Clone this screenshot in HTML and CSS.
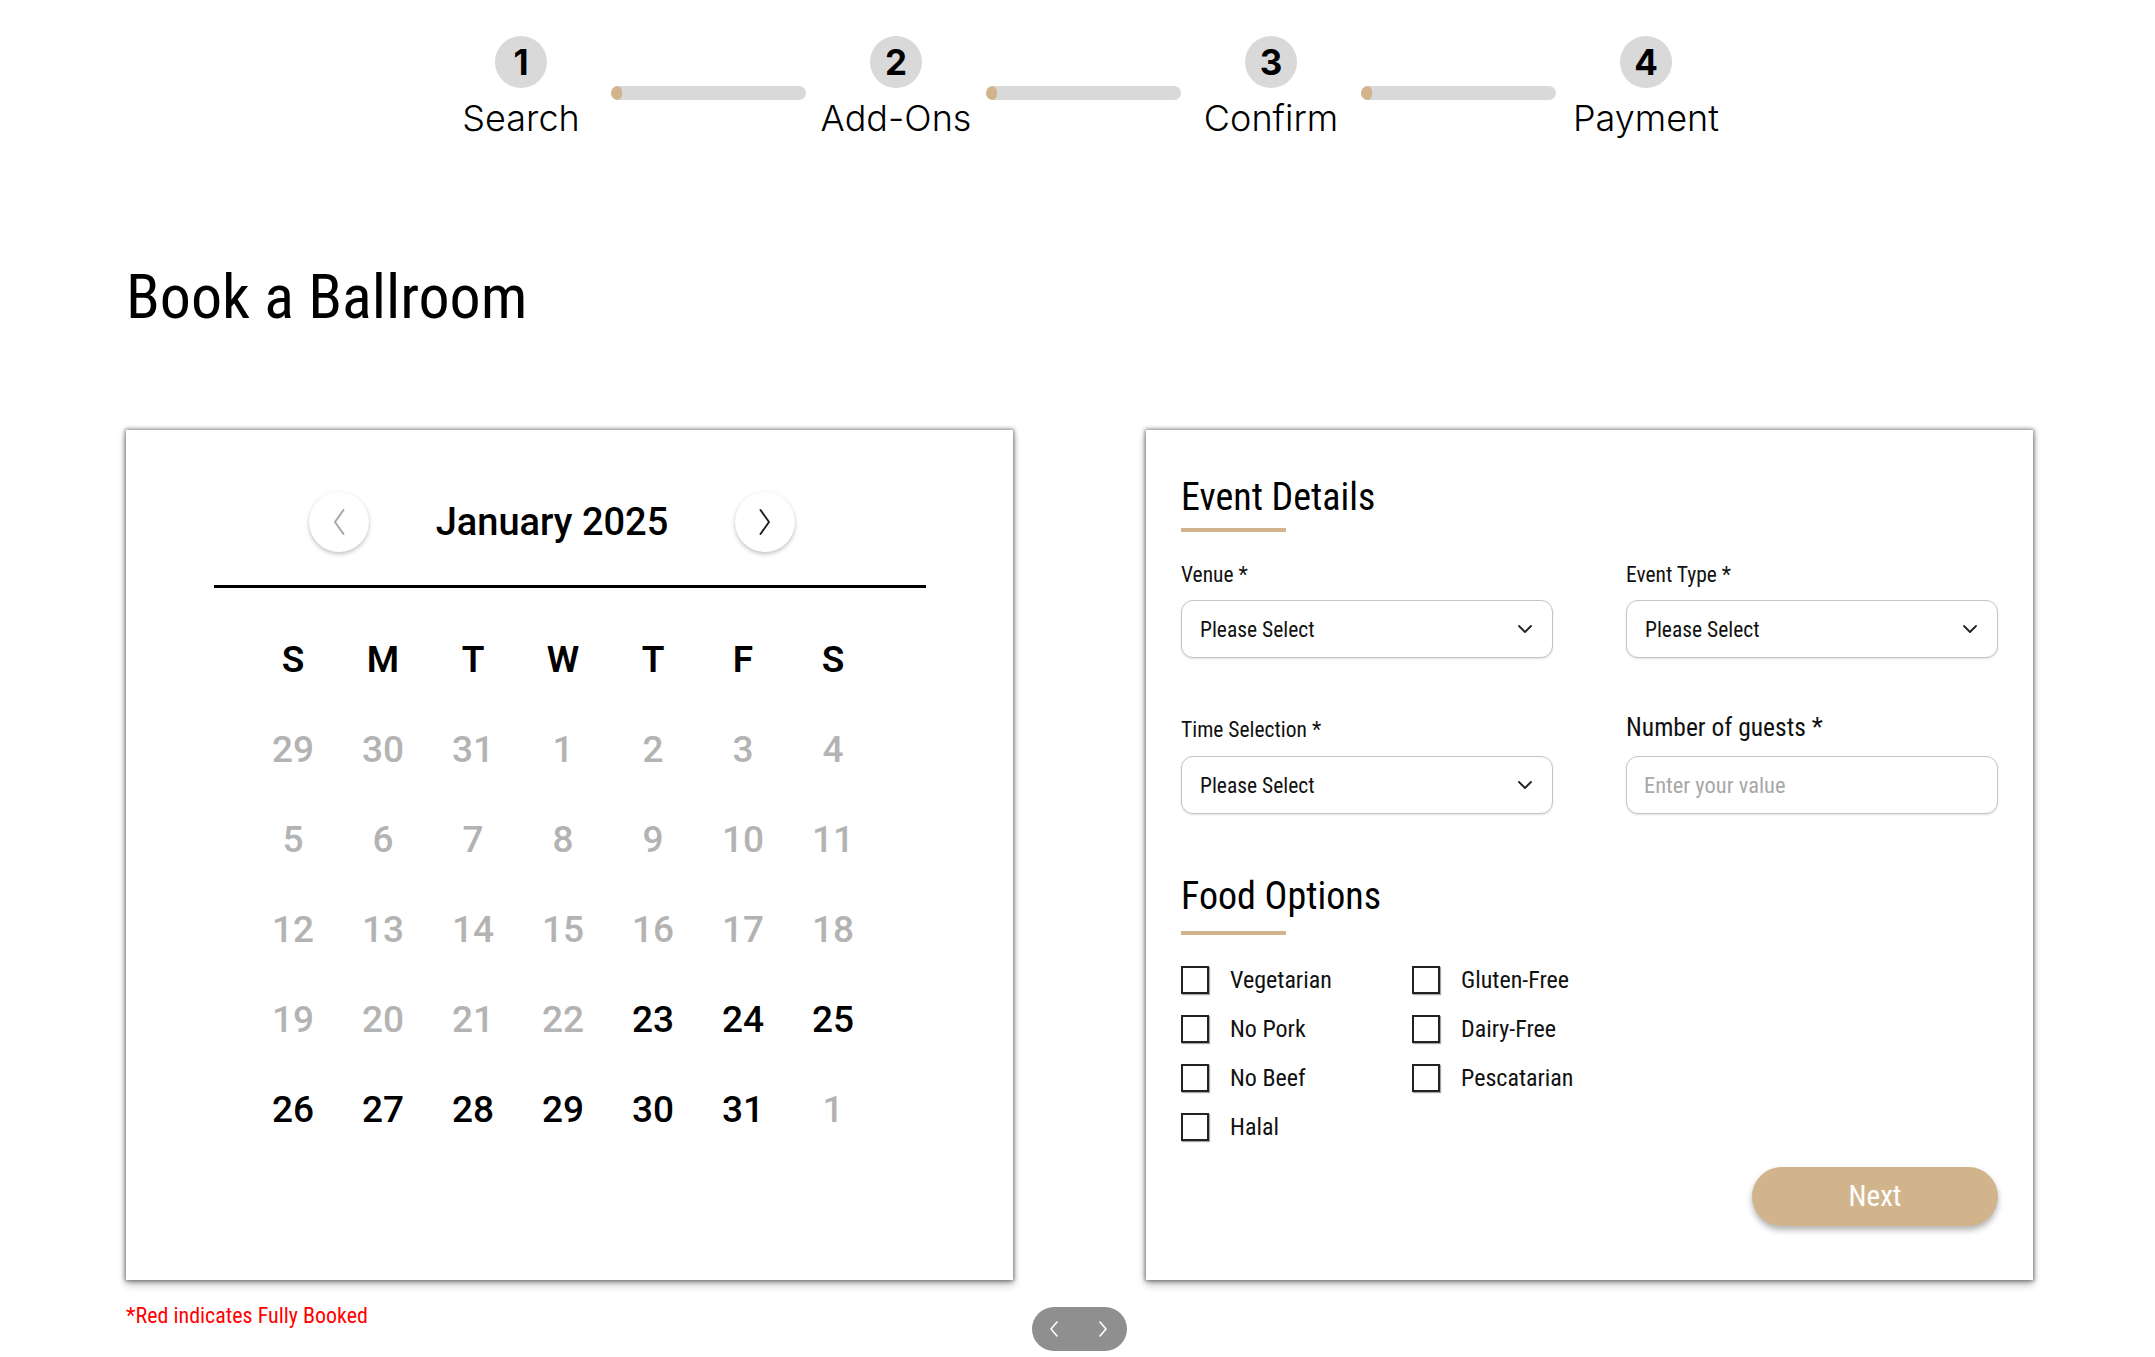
FILE: index.html
```html
<!DOCTYPE html>
<html lang="en">
<head>
<meta charset="utf-8">
<title>Book a Ballroom</title>
<link rel="stylesheet" href="styles.css">
</head>
<body>
<nav class="stepper">
  <div class="step"><div class="step-num">1</div><div class="step-label">Search</div></div>
  <div class="step-bar"><span class="step-fill"></span></div>
  <div class="step"><div class="step-num">2</div><div class="step-label">Add-Ons</div></div>
  <div class="step-bar"><span class="step-fill"></span></div>
  <div class="step"><div class="step-num">3</div><div class="step-label">Confirm</div></div>
  <div class="step-bar"><span class="step-fill"></span></div>
  <div class="step"><div class="step-num">4</div><div class="step-label">Payment</div></div>
</nav>

<main class="page">
  <h1 class="page-title">Book a Ballroom</h1>

  <div class="cards">
    <section class="card calendar">
      <div class="cal-head">
        <button class="cal-nav prev" aria-label="Previous month">
          <svg width="14" height="28" viewBox="0 0 14 28"><path d="M11.5 2 L3 14 L11.5 26" fill="none" stroke="#a6a6a6" stroke-width="2" stroke-linecap="round" stroke-linejoin="round"/></svg>
        </button>
        <div class="cal-month">January 2025</div>
        <button class="cal-nav next" aria-label="Next month">
          <svg width="14" height="28" viewBox="0 0 14 28"><path d="M2.5 2 L11 14 L2.5 26" fill="none" stroke="#222" stroke-width="2" stroke-linecap="round" stroke-linejoin="round"/></svg>
        </button>
      </div>
      <div class="cal-rule"></div>
      <div class="cal-grid">
        <div class="dow">S</div><div class="dow">M</div><div class="dow">T</div><div class="dow">W</div><div class="dow">T</div><div class="dow">F</div><div class="dow">S</div>
        <div class="day">29</div><div class="day">30</div><div class="day">31</div><div class="day">1</div><div class="day">2</div><div class="day">3</div><div class="day">4</div>
        <div class="day">5</div><div class="day">6</div><div class="day">7</div><div class="day">8</div><div class="day">9</div><div class="day">10</div><div class="day">11</div>
        <div class="day">12</div><div class="day">13</div><div class="day">14</div><div class="day">15</div><div class="day">16</div><div class="day">17</div><div class="day">18</div>
        <div class="day">19</div><div class="day">20</div><div class="day">21</div><div class="day">22</div><div class="day open">23</div><div class="day open">24</div><div class="day open">25</div>
        <div class="day open">26</div><div class="day open">27</div><div class="day open">28</div><div class="day open">29</div><div class="day open">30</div><div class="day open">31</div><div class="day">1</div>
      </div>
    </section>

    <section class="card form">
      <h2 class="section-title">Event Details</h2>
      <div class="gold-rule"></div>
      <div class="field-grid">
        <div class="field">
          <div class="field-label">Venue *</div>
          <div class="select"><span>Please Select</span>
            <svg width="16" height="10" viewBox="0 0 16 10"><path d="M2 2 L8 8 L14 2" fill="none" stroke="#222" stroke-width="1.8" stroke-linecap="round" stroke-linejoin="round"/></svg>
          </div>
        </div>
        <div class="field">
          <div class="field-label">Event Type *</div>
          <div class="select"><span>Please Select</span>
            <svg width="16" height="10" viewBox="0 0 16 10"><path d="M2 2 L8 8 L14 2" fill="none" stroke="#222" stroke-width="1.8" stroke-linecap="round" stroke-linejoin="round"/></svg>
          </div>
        </div>
        <div class="field">
          <div class="field-label">Time Selection *</div>
          <div class="select"><span>Please Select</span>
            <svg width="16" height="10" viewBox="0 0 16 10"><path d="M2 2 L8 8 L14 2" fill="none" stroke="#222" stroke-width="1.8" stroke-linecap="round" stroke-linejoin="round"/></svg>
          </div>
        </div>
        <div class="field">
          <div class="field-label large">Number of guests *</div>
          <input class="text-input" type="text" placeholder="Enter your value">
        </div>
      </div>

      <h2 class="section-title food">Food Options</h2>
      <div class="gold-rule food-rule"></div>
      <div class="checks">
        <label class="check"><span class="box"></span>Vegetarian</label>
        <label class="check"><span class="box"></span>Gluten-Free</label>
        <label class="check"><span class="box"></span>No Pork</label>
        <label class="check"><span class="box"></span>Dairy-Free</label>
        <label class="check"><span class="box"></span>No Beef</label>
        <label class="check"><span class="box"></span>Pescatarian</label>
        <label class="check"><span class="box"></span>Halal</label>
      </div>
      <div class="actions"><button class="next-btn">Next</button></div>
    </section>
  </div>

  <div class="below">
    <div class="note">*Red indicates Fully Booked</div>
    <div class="pager">
      <svg width="12" height="18" viewBox="0 0 12 18"><path d="M9 2 L3 9 L9 16" fill="none" stroke="#fff" stroke-width="1.6" stroke-linecap="round" stroke-linejoin="round"/></svg>
      <svg width="12" height="18" viewBox="0 0 12 18"><path d="M3 2 L9 9 L3 16" fill="none" stroke="#fff" stroke-width="1.6" stroke-linecap="round" stroke-linejoin="round"/></svg>
    </div>
    <div></div>
  </div>
</main>
</body>
</html>
```

FILE: styles.css
```css
* { box-sizing: border-box; }

body {
  margin: 0;
  background: #fff;
  color: #000;
  font-family: Roboto, "Liberation Sans", sans-serif;
  font-stretch: condensed;
}

/* Stepper */
.stepper {
  display: flex;
  justify-content: center;
  align-items: flex-start;
  gap: 15px;
  padding: 36px 0 0 12px;
  font-stretch: normal;
}
.step {
  width: 150px;
  display: flex;
  flex-direction: column;
  align-items: center;
}
.step-num {
  width: 52px;
  height: 52px;
  border-radius: 50%;
  background: #d9d9d9;
  display: flex;
  align-items: center;
  justify-content: center;
  font: 700 35px/1 Inter, "Liberation Sans", sans-serif;
}
.step-label {
  margin-top: 12px;
  font: 300 36px/1 Inter, "Liberation Sans", sans-serif;
  white-space: nowrap;
}
.step-bar {
  width: 195px;
  height: 14px;
  margin-top: 50px;
  border-radius: 7px;
  background: #d9d9d9;
  overflow: hidden;
}
.step-fill {
  display: block;
  width: 11px;
  height: 14px;
  border-radius: 6px;
  background: #d2b48c;
}

/* Page */
.page {
  padding: 0 122px 0 126px;
}
.page-title {
  margin: 124px 0 0;
  font-size: 62px;
  font-weight: 400;
  line-height: 1.2;
}

.cards {
  margin-top: 95.6px;
  display: grid;
  grid-template-columns: 887px 887px;
  column-gap: 133px;
}
.card {
  background: #fff;
  box-shadow: 0 0 4px 1px rgba(0,0,0,0.45), 0 4px 8px rgba(0,0,0,0.3);
}

/* Calendar */
.calendar {
  padding-top: 62px;
  font-stretch: normal;
}
.cal-head {
  width: 486px;
  height: 60px;
  margin-left: 183px;
  display: flex;
  align-items: center;
  justify-content: space-between;
}
.cal-nav {
  width: 60px;
  height: 60px;
  border: none;
  border-radius: 50%;
  background: #fff;
  box-shadow: 0 2px 4px rgba(0,0,0,0.25);
  display: flex;
  align-items: center;
  justify-content: center;
  padding: 0;
}
.cal-month {
  font: 500 38px/1 Roboto, "Liberation Sans", sans-serif;
  color: #000;
}
.cal-rule {
  width: 712px;
  height: 3px;
  margin: 33px auto 0;
  background: #000;
}
.cal-grid {
  margin: 27px 0 0 122px;
  width: 630px;
  display: grid;
  grid-template-columns: repeat(7, 90px);
  grid-auto-rows: 90px;
}
.dow, .day {
  display: flex;
  align-items: center;
  justify-content: center;
  font: 500 37px/1 Roboto, "Liberation Sans", sans-serif;
}
.dow { color: #000; font-weight: 600; }
.day { color: #b3b3b3; }
.day.open { color: #000; }

/* Form */
.form {
  padding: 46px 35px 54px;
  display: flex;
  flex-direction: column;
}
.section-title {
  margin: 0;
  font-size: 38px;
  font-weight: 400;
  line-height: 1.15;
  color: #000;
}
.section-title.food { margin-top: 61px; }
.gold-rule {
  width: 105px;
  height: 4px;
  margin-top: 8px;
  background: #d2b48c;
}
.gold-rule.food-rule { margin-top: 12px; }

.field-grid {
  margin-top: 30px;
  display: grid;
  grid-template-columns: 372px 372px;
  column-gap: 73px;
  row-gap: 54px;
  align-items: end;
}
.field {
  display: flex;
  flex-direction: column;
}
.field-label {
  font-size: 21.5px;
  line-height: 1.2;
  color: #111;
  margin-bottom: 13px;
}
.field-label.large { font-size: 25.5px; }
.select, .text-input {
  height: 58px;
  border: 1px solid #c4c4c4;
  border-radius: 12px;
  box-shadow: 0 1px 2px rgba(0,0,0,0.12);
  background: #fff;
}
.select {
  display: flex;
  align-items: center;
  justify-content: space-between;
  padding: 0 19px 0 18px;
  font-size: 21.5px;
  color: #111;
}
.text-input {
  width: 100%;
  padding: 0 17px;
  font-family: Roboto, sans-serif;
  font-stretch: condensed;
  font-size: 22.5px;
  color: #111;
  outline: none;
}
.text-input::placeholder { color: #a8a8a8; }

.checks {
  margin-top: 31px;
  display: grid;
  grid-template-columns: 231px auto;
  row-gap: 21px;
}
.check {
  display: flex;
  align-items: center;
  gap: 21px;
  height: 28px;
  font-size: 24px;
  color: #111;
}
.box {
  width: 28px;
  height: 28px;
  border: 2px solid #222;
  background: #fff;
  box-shadow: 1px 1px 1px rgba(0,0,0,0.35);
  flex: none;
}

.actions {
  margin-top: 26px;
  display: flex;
  justify-content: flex-end;
}
.next-btn {
  width: 246px;
  height: 59px;
  border: none;
  border-radius: 30px;
  background: #d2b48c;
  color: #fff;
  font-family: Roboto, sans-serif;
  font-stretch: condensed;
  font-size: 29px;
  box-shadow: 0 4px 6px rgba(0,0,0,0.3);
}

/* Below cards */
.below {
  display: grid;
  grid-template-columns: 1fr auto 1fr;
  align-items: start;
}
.note {
  margin-top: 23px;
  color: #ff0000;
  font-size: 22px;
  line-height: 1.2;
}
.pager {
  margin-top: 27px;
  width: 95px;
  height: 44px;
  border-radius: 22px;
  background: #8f8f8f;
  display: flex;
  align-items: center;
  justify-content: space-between;
  padding: 0 18px 0 16px;
}
```
